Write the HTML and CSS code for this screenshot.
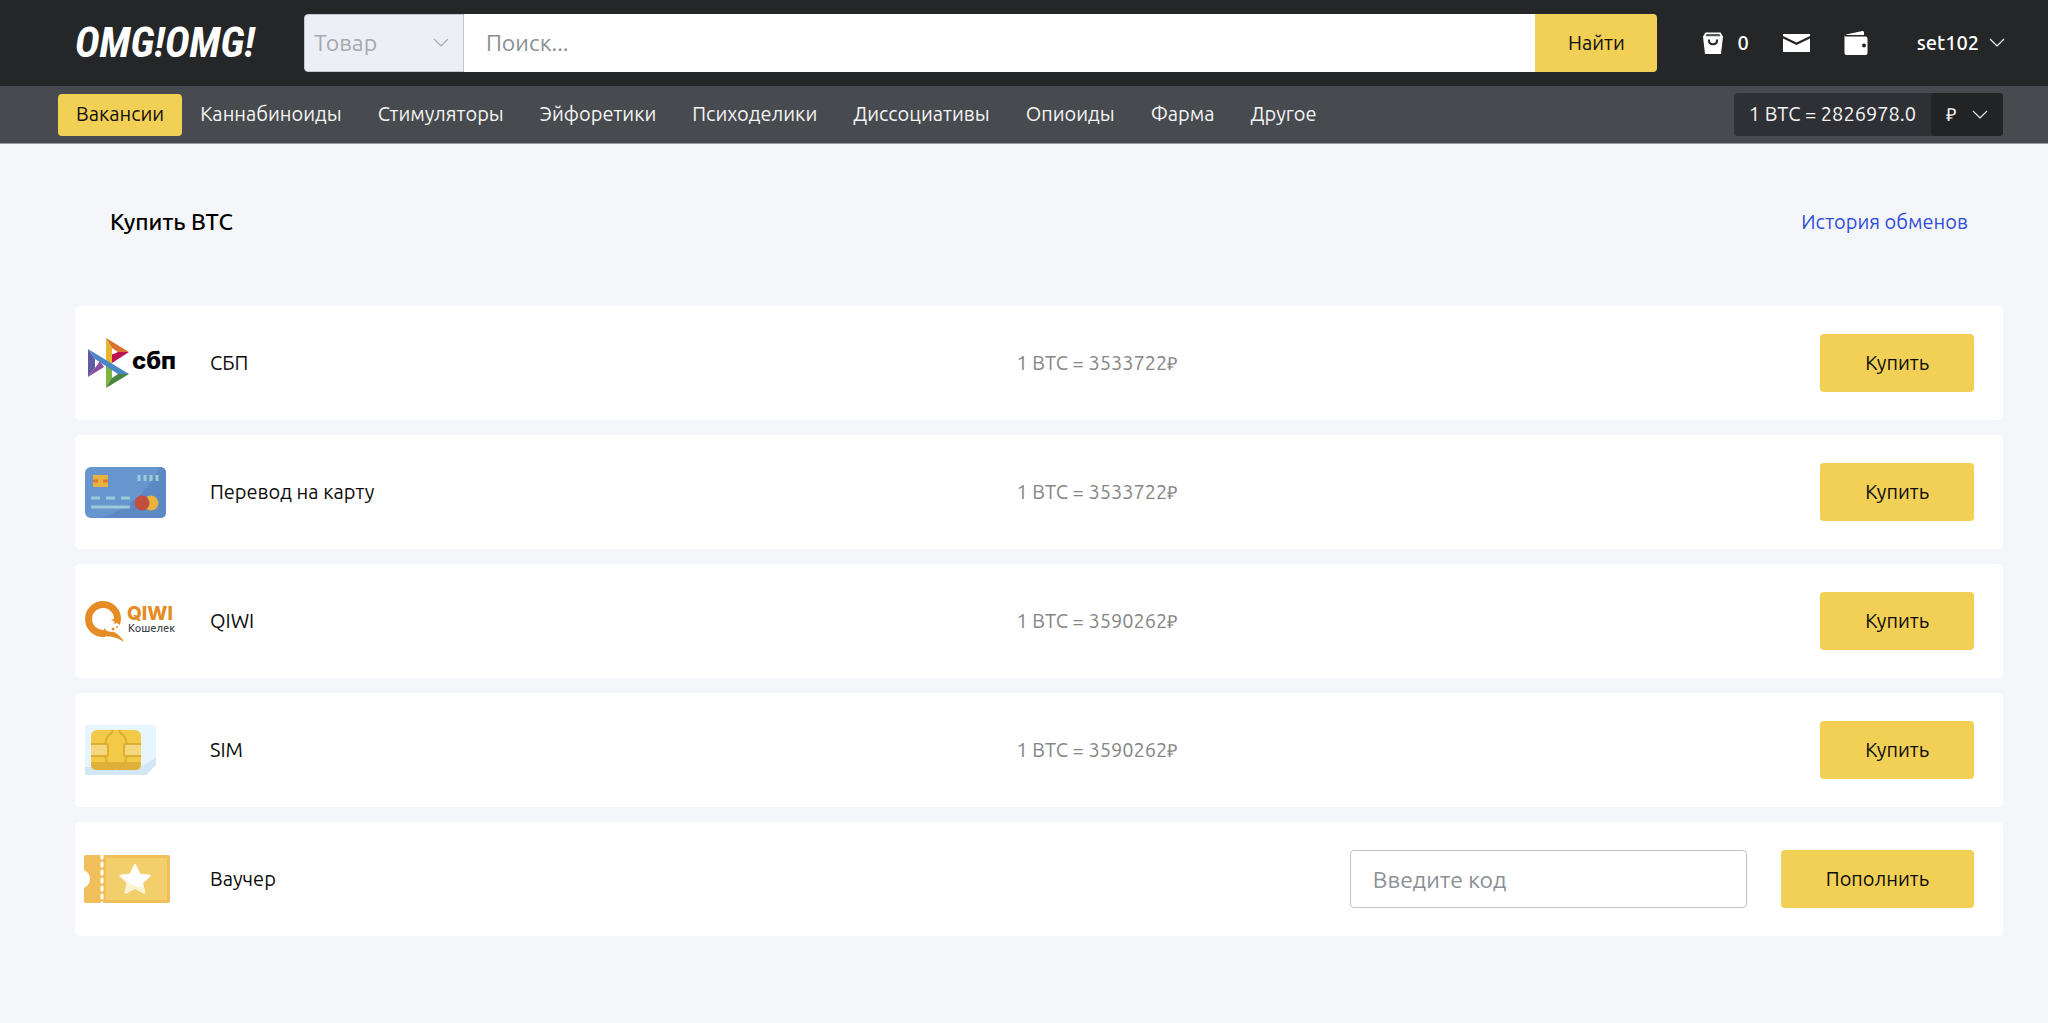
FILE: index.html
```html
<!DOCTYPE html>
<html lang="ru">
<head>
<meta charset="utf-8">
<meta name="viewport" content="width=device-width, initial-scale=1">
<title>Купить BTC</title>
<link rel="stylesheet" href="styles.css">
</head>
<body>
<header class="topbar">
  <a class="brand" href="#">OMG!OMG!</a>
  <form class="search">
    <div class="search-type">
      <select class="search-select" aria-label="Тип поиска" disabled><option>Товар</option></select>
      <svg class="chevron" viewBox="0 0 16 10"><path d="M1 1l7 7 7-7"/></svg>
    </div>
    <input class="search-input" type="text" placeholder="Поиск..." aria-label="Поиск">
    <button class="search-button" type="button">Найти</button>
  </form>
  <div class="account">
    <a class="account-cart" href="#" aria-label="Корзина">
      <svg width="22" height="24" viewBox="0 0 22 24"><path fill="#fff" d="M3.500 1.500h15l2.500 4-2 17.500H3L1 5.500z"/><path fill="#55585b" d="M4.500 3h13l1 2.200h-15z"/><path fill="none" stroke="#242628" stroke-width="2" d="M7 8.500v1c0 5 8 5 8 0v-1"/></svg>
      <span>0</span>
    </a>
    <a class="account-icon" href="#" aria-label="Сообщения">
      <svg width="27" height="24" viewBox="0 0 27 24"><path fill="#fff" d="M0 3h27v2L13.500 11.500 0 5zM0 7.500l13.500 6.500L27 7.500V21H0z"/></svg>
    </a>
    <a class="account-icon" href="#" aria-label="Кошелёк">
      <svg width="24" height="26" viewBox="0 0 24 26"><path fill="#fff" d="M2 4.500L18.500 1Q20 .8 20 2.500V5H2.500zM1.500 6.500h20q2 0 2 2V23q0 2-2 2H2.500q-2 0-2-2V5q.3 1.500 1 1.500z"/><circle cx="20" cy="15.500" r="2" fill="#242628"/></svg>
    </a>
    <button class="account-user" type="button">set102
      <svg class="chevron" viewBox="0 0 16 10"><path d="M1 1l7 7 7-7"/></svg>
    </button>
  </div>
</header>
<nav class="nav">
  <div class="nav-links">
    <a class="nav-link nav-link-active" href="#">Вакансии</a>
    <a class="nav-link" href="#">Каннабиноиды</a>
    <a class="nav-link" href="#">Стимуляторы</a>
    <a class="nav-link" href="#">Эйфоретики</a>
    <a class="nav-link" href="#">Психоделики</a>
    <a class="nav-link" href="#">Диссоциативы</a>
    <a class="nav-link" href="#">Опиоиды</a>
    <a class="nav-link" href="#">Фарма</a>
    <a class="nav-link" href="#">Другое</a>
  </div>
  <div class="course">
    <span class="course-value">1 BTC = 2826978.0</span>
    <button class="course-currency" type="button"><span class="rouble">₽</span>
      <svg class="chevron" viewBox="0 0 16 10"><path d="M1 1l7 7 7-7"/></svg>
    </button>
  </div>
</nav>
<main class="page">
  <div class="page-head">
    <h1 class="page-title">Купить BTC</h1>
    <a class="page-link" href="#">История обменов</a>
  </div>
  <ul class="methods">
    <li class="method">
      <svg class="method-logo" width="96" height="52" viewBox="0 0 96 52">
        <path fill="#5f5aa6" d="M3 12v28l7-9V22z"/><path fill="#8e4c9c" d="M3 40l16-10-4-6-5 7z"/>
        <path fill="#e8b62e" d="M21 1v27h6V11z"/><path fill="#d8702e" d="M21 1l23 14H33l-6-4z"/><path fill="#bd1250" d="M44 15L27 26V17.500l6-2.500z"/>
        <path fill="#7fb342" d="M21 25v26l6-9V27z"/><path fill="#4a8442" d="M21 51l23-14H33l-6 4z"/>
        <path fill="#4b87c8" d="M3 12l41 25H33L10 22z"/>
        <text class="logo-sbp" x="47" y="32">сбп</text>
      </svg>
      <span class="method-name">СБП</span>
      <div class="method-offer">
        <span class="method-rate">1 BTC = 3533722<span class="rouble">₽</span></span>
        <button class="button" type="button">Купить</button>
      </div>
    </li>
    <li class="method">
      <svg class="method-logo" width="96" height="52" viewBox="0 0 96 52">
        <rect x="0" y="1" width="81" height="51" rx="6" fill="#6696cd"/>
        <path fill="#5c89c4" d="M75 1q6 0 6 6v39q0 6-6 6H16Q57 38 75 1z"/>
        <path fill="#e8b23c" d="M8 9h15v12H8z"/><path stroke="#d97a33" stroke-width="3" d="M8 15h5m5 0h5"/>
        <path fill="none" stroke="#9ccbd8" stroke-width="3" d="M54 9v6M60 9v6M66 9v6M72 9v6M6 32h9M21 32h9M36 32h9M6 41h39"/>
        <circle cx="66" cy="37" r="7.500" fill="#e8b23c"/><circle cx="57" cy="37" r="7.500" fill="#c14f40"/>
      </svg>
      <span class="method-name">Перевод на карту</span>
      <div class="method-offer">
        <span class="method-rate">1 BTC = 3533722<span class="rouble">₽</span></span>
        <button class="button" type="button">Купить</button>
      </div>
    </li>
    <li class="method">
      <svg class="method-logo" width="96" height="52" viewBox="0 0 96 52">
        <path fill="none" stroke="#e58d24" stroke-width="7" d="M32.500 25A14.500 14.500 0 1 0 20 38.400"/>
        <path fill="#e58d24" d="M29 24l-3 1 4 2-2 2 4-1 3 2 1-6zM19 33l3 3q3 1 7 1 6 3 10 10-8-6-20-6z"/>
        <circle cx="28" cy="34" r="1.500" fill="#e58d24"/><circle cx="32" cy="32" r="1" fill="#e58d24"/>
        <text class="logo-qiwi" x="42" y="25">QIWI</text>
        <text class="logo-wallet" x="43" y="37">Кошелек</text>
      </svg>
      <span class="method-name">QIWI</span>
      <div class="method-offer">
        <span class="method-rate">1 BTC = 3590262<span class="rouble">₽</span></span>
        <button class="button" type="button">Купить</button>
      </div>
    </li>
    <li class="method">
      <svg class="method-logo" width="96" height="52" viewBox="0 0 96 52">
        <path fill="#e6f5ff" d="M2 1h67q2 0 2 2v31L61 51H2q-2 0-2-2V3q0-2 2-2z"/>
        <path fill="#d3e6f3" d="M0 43h55l16-9v7L61 51H2q-2 0-2-2z"/>
        <rect x="6" y="6" width="50" height="40" rx="6" fill="#f2ca47"/>
        <path fill="#dfb138" d="M6 38h50v2q0 6-6 6H12q-6 0-6-6z"/>
        <path fill="#f5d87d" d="M6 20h16v12H6zM40 20h16v12H40z"/>
        <path fill="none" stroke="#dcae36" stroke-width="2" d="M6 20h15q2 0 2 2v8q0 2-2 2H6M56 20H41q-2 0-2 2v8q0 2 2 2h15M27 6q1 3-2 4-5 4-4 10M21 32q-1 6 4 9 3 2 2 5M35 6q-1 3 2 4 5 4 4 10M41 32q1 6-4 9-3 2-2 5"/>
      </svg>
      <span class="method-name">SIM</span>
      <div class="method-offer">
        <span class="method-rate">1 BTC = 3590262<span class="rouble">₽</span></span>
        <button class="button" type="button">Купить</button>
      </div>
    </li>
    <li class="method">
      <svg class="method-logo" width="96" height="52" viewBox="0 0 96 52">
        <path fill="#f0bf5b" d="M1 2h82q2 0 2 2v44q0 2-2 2H1q-2 0-2-2V35q6-3 6-9t-6-9V4q0-2 2-2z"/>
        <path fill="#f3cf6b" d="M21 5h61v42H21z"/>
        <path stroke="#fff" stroke-width="3" stroke-linecap="round" stroke-dasharray="3 5" d="M17 2v50"/>
        <path fill="#fff" stroke="#fff" stroke-width="2" stroke-linejoin="round" d="M50 12l4.500 9.500 10 1.200-7.500 7 2 10-9-5-9 5 2-10-7.500-7 10-1.200z"/>
        <path fill="#fcf3d2" d="M35.500 23q7 9 24 12l.8 5-1 .7L50 35.500l-9.500 5-1-.8L41.500 30 34.700 23z"/>
      </svg>
      <label class="method-name" for="voucher">Ваучер</label>
      <form class="voucher">
        <input class="voucher-input" id="voucher" type="text" placeholder="Введите код">
        <button class="button" type="button">Пополнить</button>
      </form>
    </li>
  </ul>
</main>
</body>
</html>
```

FILE: styles.css
```css
* {
  box-sizing: border-box;
}

body {
  margin: 0;
  background: #f5f6f9;
  color: #0c0c0c;
  font: 20px/28px "Ubuntu", "Noto Sans", sans-serif;
}

a {
  color: inherit;
  text-decoration: none;
}

button,
input,
select {
  margin: 0;
  border: 0;
  font: inherit;
  color: inherit;
}

button {
  cursor: pointer;
}

.chevron {
  flex: none;
  width: 16px;
  height: 10px;
  fill: none;
  stroke: currentColor;
  stroke-width: 1.1;
}

.rouble {
  font-family: "Liberation Serif", serif;
  font-size: 18px;
}

.topbar {
  display: flex;
  align-items: center;
  height: 86px;
  padding: 0 43px 0 75px;
  background: #242628;
  color: #fff;
}

.brand {
  flex: none;
  width: 229px;
  font: italic 700 42px/56px "Roboto Condensed", "Liberation Sans Narrow", sans-serif;
}

.search {
  display: flex;
  flex: 1;
  height: 58px;
}

.search-type {
  display: flex;
  align-items: center;
  width: 160px;
  padding-right: 14px;
  border: 1px solid #c3c6cc;
  border-radius: 4px 0 0 4px;
  background: #eceff5;
  color: #a4a8ad;
}

.search-select {
  flex: 1;
  min-width: 0;
  padding: 0 0 0 9px;
  appearance: none;
  background: none;
  color: #a4a8ad;
  font-size: 23px;
  opacity: 1;
}

.search-input {
  flex: 1;
  min-width: 0;
  padding: 0 22px;
  background: #fff;
  color: #111;
  font-size: 23px;
}

.search-input::placeholder,
.voucher-input::placeholder {
  color: #8a8f96;
}

.search-button {
  width: 122px;
  border-radius: 0 4px 4px 0;
  background: #f2d056;
  color: #111;
}

.account {
  display: flex;
  flex: none;
  align-items: center;
  padding-left: 45px;
  font-weight: 500;
}

.account-cart {
  display: flex;
  align-items: center;
  gap: 13px;
}

.account-icon {
  display: flex;
  margin-left: 34px;
}

.account-user {
  display: flex;
  align-items: center;
  gap: 10px;
  margin-left: 49px;
  padding: 0;
  background: none;
}

.nav {
  display: flex;
  align-items: center;
  justify-content: space-between;
  height: 58px;
  padding: 0 45px 0 58px;
  border-bottom: 1px solid #9a9da1;
  background: #474a4e;
  color: #f4f4f4;
}

.nav-links,
.course {
  display: flex;
}

.nav-link {
  padding: 6px 18px 8px;
}

.nav-link-active {
  border-radius: 4px;
  background: #f2d056;
  color: #111;
}

.course {
  height: 43px;
  border-radius: 4px;
  background: #2f3035;
}

.course-value {
  padding: 7px 15px;
}

.course-currency {
  display: flex;
  align-items: center;
  gap: 16px;
  padding: 0 15px;
  border-radius: 4px;
  background: #222325;
}

.page {
  padding: 64px 45px 87px 75px;
}

.page-head {
  display: flex;
  align-items: center;
  justify-content: space-between;
  padding: 0 35px;
}

.page-title {
  margin: 0;
  color: #000;
  font-size: 23px;
  font-weight: 500;
}

.page-link {
  color: #2f4fd8;
}

.methods {
  display: flex;
  flex-direction: column;
  gap: 15px;
  margin: 70px 0 0;
  padding: 0;
  list-style: none;
}

.method {
  display: grid;
  grid-template-columns: 125px 16fr 19fr;
  align-items: center;
  padding: 28px 29px 28px 10px;
  border-radius: 5px;
  background: #fff;
}

.method-logo {
  display: block;
  overflow: visible;
}

.method-offer {
  display: flex;
  align-items: center;
  justify-content: space-between;
}

.method-rate {
  color: #868686;
}

.button {
  height: 58px;
  padding: 0 45px;
  border-radius: 4px;
  background: #f2d056;
}

.voucher {
  display: flex;
  justify-content: flex-end;
  gap: 34px;
}

.voucher-input {
  width: 397px;
  height: 58px;
  padding: 0 22px;
  border: 1px solid #bfc2c9;
  border-radius: 4px;
  background: #fff;
  font-size: 23px;
}

.logo-sbp {
  font: 800 24px "Inter", sans-serif;
}

.logo-qiwi {
  fill: #e58d24;
  font: 800 19px "Inter", sans-serif;
}

.logo-wallet {
  fill: #3f454d;
  font: 500 11px "Ubuntu", sans-serif;
}
```
